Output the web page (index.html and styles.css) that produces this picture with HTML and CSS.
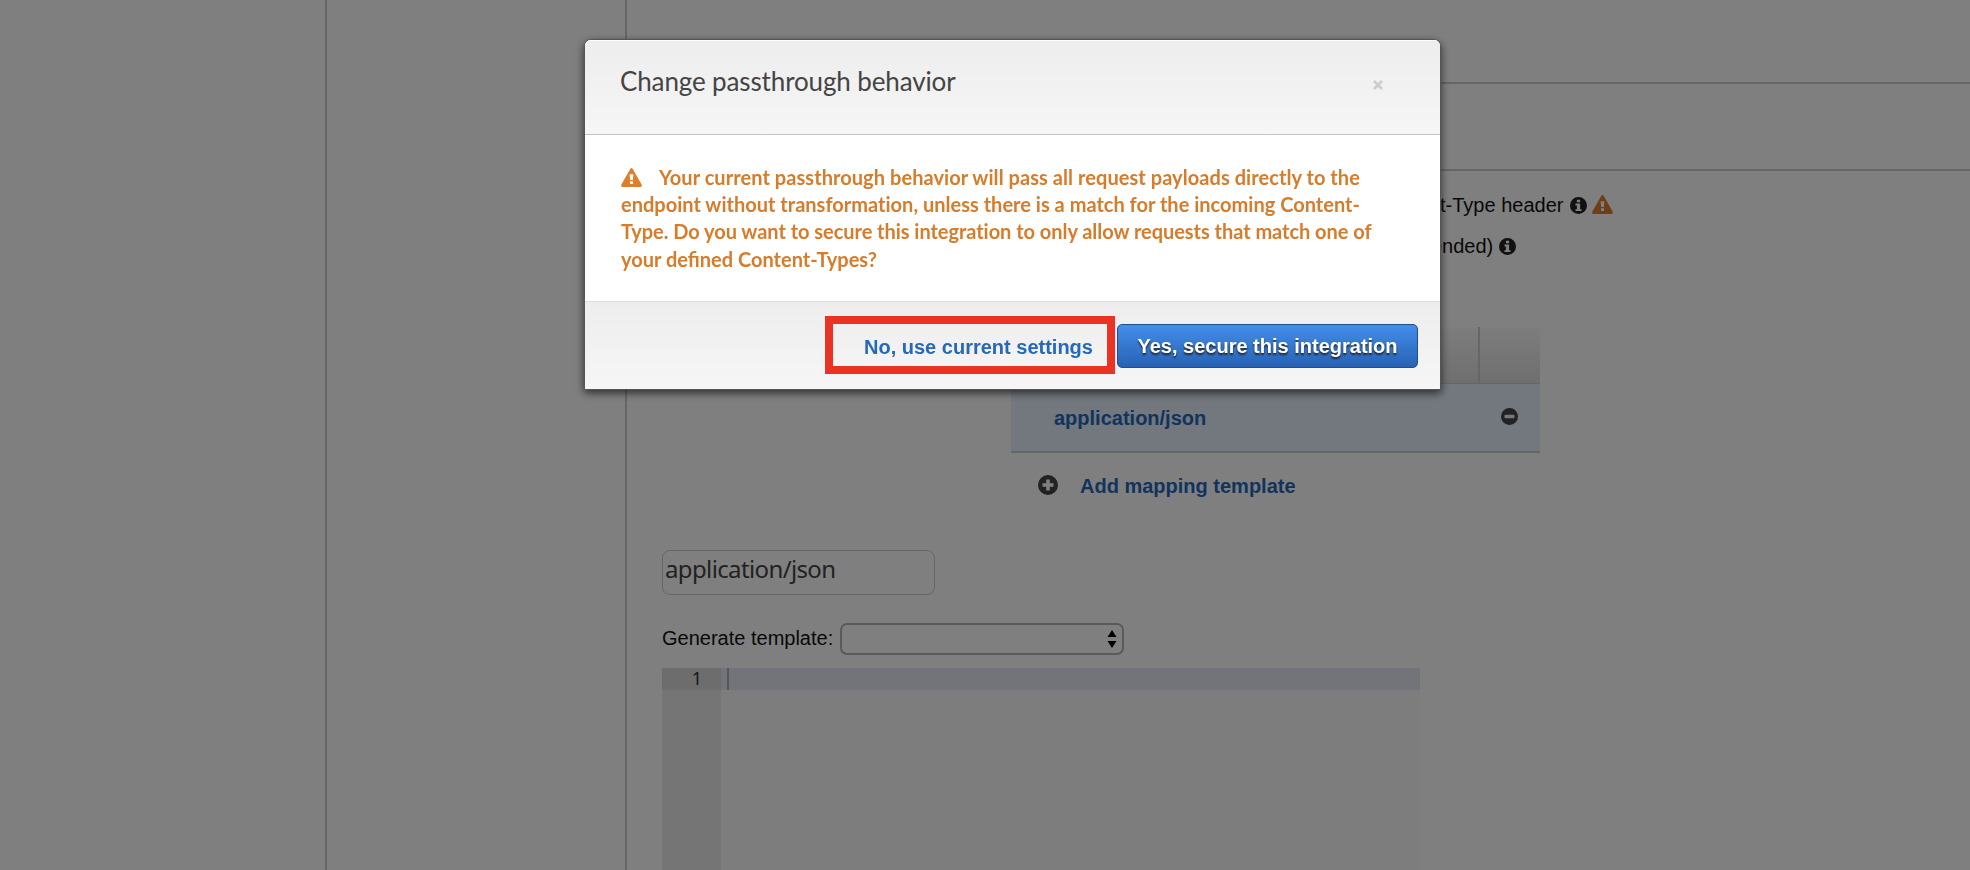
FILE: index.html
```html
<!DOCTYPE html>
<html lang="en">
<head>
<meta charset="utf-8">
<title>Change passthrough behavior</title>
<link rel="stylesheet" href="styles.css">
</head>
<body>
<svg class="defs" width="0" height="0">
  <symbol id="warn" viewBox="0 0 21 19"><path fill-rule="evenodd" d="M9.2.9Q10.500-.9 11.800.9L20.600 16.600Q21.400 19 19.300 19H1.700Q-.4 19 .4 16.600ZM8.700 6.300V7.800L9.200 12H11.800L12.300 7.800V6.300ZM9 13.300V15.900H12V13.300Z"/></symbol>
  <symbol id="info" viewBox="0 0 18 18"><path fill-rule="evenodd" d="M9 0A9 9 0 1 1 9 18A9 9 0 1 1 9 0ZM7.300 2.900V5.600H10.700V2.900ZM5.800 7V8.900H7.300V12.900H5.800V14.800H12.200V12.900H10.700V7Z"/></symbol>
  <symbol id="minus" viewBox="0 0 18 18"><path fill-rule="evenodd" d="M9 0A9 9 0 1 1 9 18A9 9 0 1 1 9 0ZM4.500 7.200Q3.700 7.200 3.700 8V10Q3.700 10.800 4.500 10.800H13.500Q14.300 10.800 14.300 10V8Q14.300 7.200 13.500 7.200Z"/></symbol>
  <symbol id="plus" viewBox="0 0 20 20"><path fill-rule="evenodd" d="M10 0A10 10 0 1 1 10 20A10 10 0 1 1 10 0ZM8.200 4.500V8.200H4.500V11.800H8.200V15.500H11.800V11.800H15.500V8.200H11.800V4.500Z"/></symbol>
</svg>
<div class="page">
  <aside class="nav"></aside>
  <aside class="resources"></aside>
  <main class="main">
    <div class="band band-first"></div>
    <div class="band"></div>
    <div class="options">
      <div class="option"><span class="type-label">t-Type header</span><svg class="info"><use href="#info"/></svg><svg class="warn"><use href="#warn"/></svg></div>
      <div class="option"><span class="rec-label">ended)</span><svg class="info"><use href="#info"/></svg></div>
    </div>
    <div class="table">
      <div class="table-head"><span class="head-type"></span><span class="head-action"></span></div>
      <div class="table-row"><a class="link row-link">application/json</a><svg class="minus"><use href="#minus"/></svg></div>
      <div class="table-add"><svg class="plus"><use href="#plus"/></svg><a class="link add-link">Add mapping template</a></div>
    </div>
    <div class="type-input">application/json</div>
    <div class="generate">
      <span class="generate-label">Generate template:</span>
      <div class="select"><svg width="10" height="18" viewBox="0 0 10 18"><path d="M5 0L9.500 7H.5ZM5 18L9.500 11H.5Z"/></svg></div>
    </div>
    <div class="editor">
      <div class="gutter"><div class="line-number">1</div></div>
      <div class="code"><div class="active-line"><i class="cursor"></i></div></div>
    </div>
  </main>
</div>
<div class="overlay">
  <section class="modal">
    <header class="modal-head">
      <h1 class="title">Change passthrough behavior</h1>
      <svg class="close" width="10" height="10" viewBox="0 0 10 10"><path d="M1 1L9 9M9 1L1 9"/></svg>
    </header>
    <div class="modal-body"><p class="message"><svg class="warn"><use href="#warn"/></svg><span class="first">Your current passthrough behavior will pass all request payloads directly to the</span><br><span class="second">endpoint without transformation, unless there is a match for the incoming Content-</span><br><span class="third">Type. Do you want to secure this integration to only allow requests that match one of</span><br><span>your defined Content-Types?</span></p></div>
    <footer class="modal-foot">
      <div class="highlight"><a class="keep">No, use current settings</a></div>
      <div class="confirm">Yes, secure this integration</div>
    </footer>
  </section>
</div>
</body>
</html>
```
FILE: styles.css
```css
* { box-sizing: border-box; }
body { margin: 0; height: 870px; overflow: hidden; background: #fff; font: 20px/24px "Liberation Sans", Arial, sans-serif; color: #111; }
svg { display: block; flex: none; }
.defs { position: absolute; }
.page { display: flex; height: 870px; }
.nav { width: 327px; border-right: 2px solid #ccc; }
.resources { width: 300px; border-right: 2px solid #ccc; }
.main { flex: 1; display: flex; flex-direction: column; }
.band { height: 87px; border-bottom: 2px solid #ccc; }
.band-first { height: 84px; }
.options { height: 156px; padding: 22px 0 0 813px; }
.option { display: flex; align-items: center; height: 24px; margin-bottom: 17px; white-space: nowrap; }
.type-label { width: 123px; margin-right: 7px; }
.rec-label { width: 61px; margin: 0 7px 0 -9px; }
.info { width: 17px; height: 17px; fill: #222; }
.warn { width: 21px; height: 19px; fill: #dd7f2c; }
.option .warn { margin: -2px 0 0 5px; }
.table { width: 529px; margin-left: 384px; }
.table-head { display: flex; height: 57px; background: linear-gradient(#fafafa, #dedede); border-bottom: 1px solid #ccc; }
.head-type { width: 467px; }
.head-action { flex: 1; border-left: 2px solid #ccc; }
.table-row { display: flex; align-items: center; justify-content: space-between; height: 69px; padding: 0 22px 2px 43px; background: #e6eefc; border-bottom: 2px solid #ccc; }
.link { font-weight: bold; color: #2569b8; white-space: nowrap; }
.row-link { margin-top: 3px; }
.minus { width: 17px; height: 17px; fill: #444; }
.table-add { display: flex; align-items: center; height: 67px; padding: 0 0 3px 27px; gap: 22px; }
.add-link { margin-top: 2px; }
.plus { width: 20px; height: 20px; fill: #444; }
.type-input { width: 273px; height: 45px; margin: 30px 0 0 35px; padding: 2px; border: 1px solid #ccc; border-radius: 8px; color: #444; font: 24px/32px "Noto Sans", sans-serif; letter-spacing: -.63px; }
.generate { display: flex; align-items: center; height: 32px; margin: 28px 0 0 35px; }
.generate-label { width: 178px; margin-top: -2px; }
.select { display: flex; align-items: center; justify-content: flex-end; width: 284px; height: 32px; padding-right: 5px; border: 2px solid #b4b4b4; border-radius: 7px; }
.editor { display: flex; flex: 1; width: 758px; margin: 13px 0 0 35px; }
.gutter { width: 59px; background: #ebebeb; }
.line-number { height: 22px; padding-right: 19px; background: #dadada; color: #333; font: 18px/20px "Noto Sans", sans-serif; text-align: right; }
.code { flex: 1; background: #fbfbfb; }
.active-line { height: 22px; padding-left: 6px; background: #e4e8f4; }
.cursor { display: block; width: 2px; height: 22px; background: #aaafba; }
.overlay { position: fixed; inset: 0; display: flex; justify-content: center; align-items: flex-start; padding: 39px 0 0 55px; background: rgba(0, 0, 0, .5); }
.modal { width: 857px; height: 351px; border: 1px solid #555; border-radius: 7px 7px 0 0; overflow: hidden; background: #fff; box-shadow: 0 3px 9px rgba(0, 0, 0, .65); }
.modal-head { display: flex; justify-content: space-between; height: 95px; padding: 25px 57px 0 35px; background: linear-gradient(#ededed, #f6f6f6); border-bottom: 1px solid #c4c4c4; box-shadow: inset 0 1px #fff; }
.title { margin: 0; font: 26px/32px Lato, sans-serif; letter-spacing: -.13px; color: #444; }
.close { margin-top: 15px; fill: none; stroke: #ccc; stroke-width: 2.600; }
.modal-body { height: 166px; padding: 29px 35px 0 36px; }
.message { margin: 0; font: bold 20px/27.200px Lato, sans-serif; color: #d67c2b; white-space: nowrap; }
.message .warn { display: inline-block; margin-right: 17px; vertical-align: -2px; }
.first { letter-spacing: .06px; }
.second { letter-spacing: .01px; }
.third { letter-spacing: -.04px; }
.modal-foot { display: flex; align-items: flex-start; height: 88px; padding: 14px 22px 0 0; justify-content: flex-end; border-top: 1px solid #ddd; background: linear-gradient(#ededed, #f6f6f6); }
.highlight { width: 290px; height: 58px; border: 8px solid #ea3323; padding: 11px 0 0 31px; }
.keep { color: #2569b8; font-weight: bold; white-space: nowrap; }
.confirm { width: 301px; height: 44px; margin: 8px 0 0 2px; border: 1px solid #1d4f91; border-radius: 5px; background: linear-gradient(#448eea, #2762b4); color: #fff; font-weight: bold; line-height: 43px; text-align: center; text-shadow: 0 2px 2px #222; }
```
